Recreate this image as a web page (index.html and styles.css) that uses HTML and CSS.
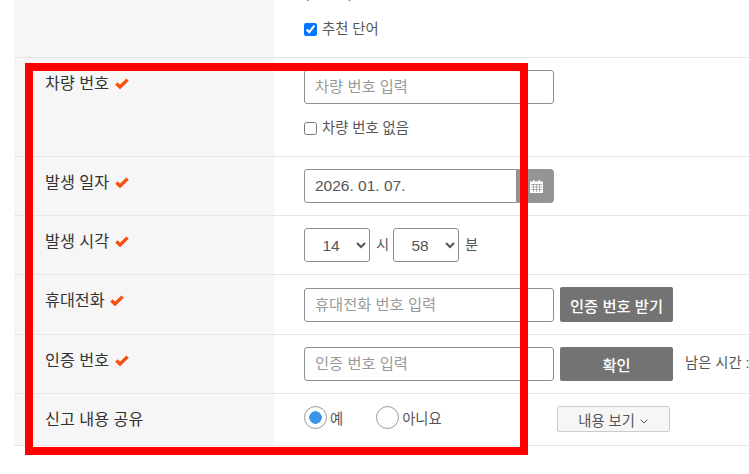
FILE: index.html
```html
<!DOCTYPE html>
<html lang="ko">
<head>
<meta charset="utf-8">
<title>신고 입력</title>
<link rel="stylesheet" href="styles.css">
</head>
<body>
<main class="form">
  <div class="row row-first">
    <div class="head"></div>
    <div class="field field-first">
      <p class="note">(추천어)</p>
      <label class="check"><input type="checkbox" checked> 추천 단어</label>
    </div>
  </div>

  <div class="row">
    <div class="head">차량 번호 <svg class="req" viewBox="0 0 14 11"><path d="M1.4 5.6 5 9 12.6 1.6"/></svg></div>
    <div class="field field-stack">
      <input class="text" type="text" placeholder="차량 번호 입력">
      <label class="check check-below"><input type="checkbox"> 차량 번호 없음</label>
    </div>
  </div>

  <div class="row">
    <div class="head">발생 일자 <svg class="req" viewBox="0 0 14 11"><path d="M1.4 5.6 5 9 12.6 1.6"/></svg></div>
    <div class="field">
      <div class="date">
        <input class="text text-date" type="text" value="2026. 01. 07.">
        <span class="addon">
          <svg class="cal" viewBox="0 0 13 14">
            <path class="cal-body" d="M0 2.5h3V1h1.500v1.500h4V1H10v1.500h3V14H0z"/>
            <path class="cal-grid" d="M1 5.500h11M1 8h11M1 10.500h11M3.500 5v8M6.500 5v8M9.500 5v8"/>
          </svg>
        </span>
      </div>
    </div>
  </div>

  <div class="row">
    <div class="head">발생 시각 <svg class="req" viewBox="0 0 14 11"><path d="M1.4 5.6 5 9 12.6 1.6"/></svg></div>
    <div class="field field-time">
      <select class="pick"><option>14</option></select>
      <span class="unit">시</span>
      <select class="pick"><option>58</option></select>
      <span class="unit">분</span>
    </div>
  </div>

  <div class="row row-phone">
    <div class="head">휴대전화 <svg class="req" viewBox="0 0 14 11"><path d="M1.4 5.6 5 9 12.6 1.6"/></svg></div>
    <div class="field">
      <input class="text text-offset" type="text" placeholder="휴대전화 번호 입력">
      <button class="action action-tall" type="button">인증 번호 받기</button>
    </div>
  </div>

  <div class="row">
    <div class="head">인증 번호 <svg class="req" viewBox="0 0 14 11"><path d="M1.4 5.6 5 9 12.6 1.6"/></svg></div>
    <div class="field">
      <input class="text" type="text" placeholder="인증 번호 입력">
      <button class="action" type="button">확인</button>
      <span class="timer">남은 시간 : 03:00</span>
    </div>
  </div>

  <div class="row">
    <div class="head">신고 내용 공유</div>
    <div class="field field-share">
      <label class="choice"><input class="radio" type="radio" name="share" checked>예</label>
      <label class="choice choice-no"><input class="radio" type="radio" name="share">아니요</label>
      <button class="more" type="button">내용 보기
        <svg class="chev" viewBox="0 0 8 5"><path d="M.7.7 4 4 7.300.7"/></svg>
      </button>
    </div>
  </div>
</main>
<div class="mark"></div>
</body>
</html>
```
FILE: styles.css
```css
html, body {
  margin: 0;
  height: 100%;
  overflow: hidden;
  background: #fff;
}
body {
  font-family: "Liberation Sans", "Noto Sans CJK KR", sans-serif;
  color: #555;
  font-size: 14.3px;
}
.form {
  margin: -20px 0 0 14px;
}
.row {
  display: flex;
  border-bottom: 1px solid #e6e6e6;
}
.row-first {
  height: 77px;
}
.head {
  flex: 0 0 229px;
  padding: 13px 0 0 31px;
  background: #f6f6f6;
  font-size: 16.2px;
  line-height: 24px;
  color: #333;
  white-space: nowrap;
}
.req {
  width: 14px;
  height: 11px;
  margin-left: 1px;
  fill: none;
  stroke: #f9500e;
  stroke-width: 3.4;
}
.field {
  flex: 1;
  min-width: 0;
  display: flex;
  align-items: flex-start;
  padding: 12px 0 12px 30px;
  white-space: nowrap;
  overflow: hidden;
}
.field > * {
  flex-shrink: 0;
}
.field-first {
  display: block;
  padding-top: 0;
}
.note {
  margin: 2px 0 15px;
  height: 22px;
  line-height: 22px;
}
.field-stack {
  flex-direction: column;
  padding-bottom: 18px;
}
.check {
  display: flex;
  align-items: center;
  gap: 5px;
  height: 20px;
  line-height: 20px;
}
.check-below {
  margin-top: 14px;
}
.check input {
  margin: 0;
  width: 13px;
  height: 13px;
}
.text {
  box-sizing: border-box;
  width: 250px;
  height: 34px;
  padding: 0 10px;
  border: 1px solid #8f8f8f;
  border-radius: 3px;
  font: inherit;
  font-size: 15.300px;
  color: #555;
  background: #fff;
}
.text::placeholder {
  color: #999;
}
.text-offset {
  margin-top: 1px;
}
.date {
  display: flex;
}
.text-date {
  width: 213px;
  border-radius: 3px 0 0 3px;
  font-size: 15.500px;
}
.addon {
  width: 37px;
  height: 34px;
  display: flex;
  align-items: center;
  justify-content: center;
  background: #949494;
  border-radius: 0 4px 4px 0;
}
.cal {
  width: 13px;
  height: 14px;
  margin-left: 1px;
}
.cal-body {
  fill: #fff;
}
.cal-grid {
  fill: none;
  stroke: #949494;
  stroke-width: .7;
}
.field-time {
  align-items: center;
}
.pick {
  box-sizing: border-box;
  width: 66px;
  height: 34px;
  border: 1px solid #8f8f8f;
  border-radius: 3px;
  background: #fff;
  font: inherit;
  font-size: 15.500px;
  color: #555;
  text-align: center;
}
.unit {
  width: 23px;
  padding: 0 0 3px 6px;
  box-sizing: border-box;
}
.action {
  box-sizing: border-box;
  width: 113px;
  height: 34px;
  margin-left: 6px;
  padding: 0;
  border: 0;
  border-radius: 2px;
  background: #737373;
  color: #fff;
  font: inherit;
  font-size: 15.300px;
  font-weight: 500;
}
.action-tall {
  height: 35px;
}
.timer {
  margin-left: 12px;
  line-height: 32px;
}
.field-share {
  align-items: flex-start;
  padding-bottom: 13px;
}
.choice {
  display: flex;
  align-items: center;
  height: 23px;
  gap: 3px;
}
.choice-no {
  margin-left: 33px;
}
.radio {
  appearance: none;
  box-sizing: border-box;
  width: 23px;
  height: 23px;
  margin: 0;
  border: 1px solid #999;
  border-radius: 50%;
  background: #fff;
}
.radio:checked {
  background: radial-gradient(circle, #3b95e6 6px, #fff 6.500px);
}
.more {
  box-sizing: border-box;
  width: 113px;
  height: 26px;
  margin-left: 115px;
  padding: 0;
  border: 1px solid #ccc;
  border-radius: 2px;
  background: #f6f6f6;
  color: #555;
  font: inherit;
  font-size: 14.300px;
}
.chev {
  width: 8px;
  height: 5px;
  margin-left: 1px;
  vertical-align: 2px;
  fill: none;
  stroke: #555;
  stroke-width: 1;
}
.mark {
  position: absolute;
  left: 25px;
  top: 63px;
  width: 487px;
  height: 376px;
  border: 8px solid #f00;
}
```
